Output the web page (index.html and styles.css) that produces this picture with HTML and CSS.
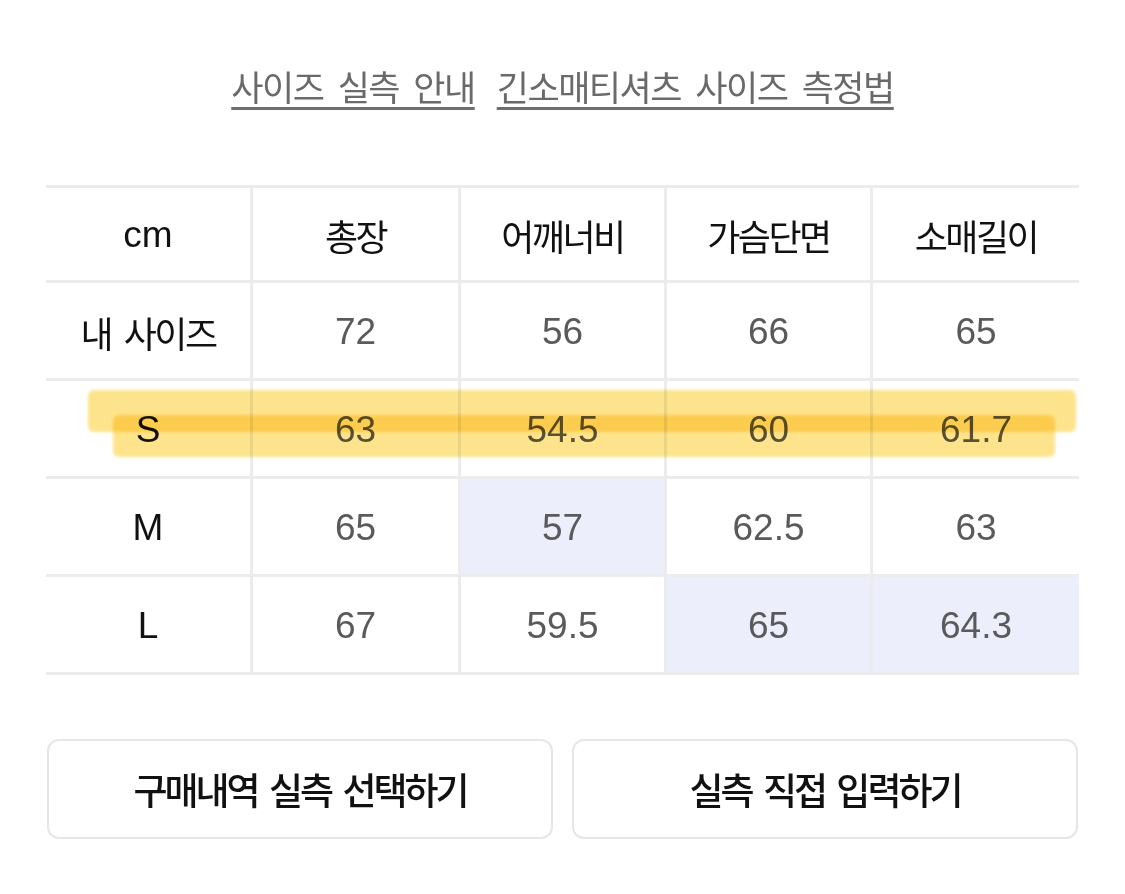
FILE: index.html
```html
<!DOCTYPE html>
<html lang="ko">
<head>
<meta charset="utf-8">
<title>사이즈</title>
<link rel="stylesheet" href="styles.css">
</head>
<body>
<div class="page">
  <nav class="links">
    <a class="link">사이즈 실측 안내</a>
    <a class="link">긴소매티셔츠 사이즈 측정법</a>
  </nav>

  <div class="table-wrap">
    <div class="table">
      <div class="cell head lat">cm</div>
      <div class="cell head ko">총장</div>
      <div class="cell head ko">어깨너비</div>
      <div class="cell head ko">가슴단면</div>
      <div class="cell head ko last">소매길이</div>

      <div class="cell label ko">내 사이즈</div>
      <div class="cell val">72</div>
      <div class="cell val">56</div>
      <div class="cell val">66</div>
      <div class="cell val last">65</div>

      <div class="cell label lat">S</div>
      <div class="cell val">63</div>
      <div class="cell val">54.5</div>
      <div class="cell val">60</div>
      <div class="cell val last">61.7</div>

      <div class="cell label lat">M</div>
      <div class="cell val">65</div>
      <div class="cell val blue">57</div>
      <div class="cell val">62.5</div>
      <div class="cell val last">63</div>

      <div class="cell label lat">L</div>
      <div class="cell val">67</div>
      <div class="cell val">59.5</div>
      <div class="cell val blue">65</div>
      <div class="cell val blue last">64.3</div>
    </div>
    <div class="marker marker-a"></div>
    <div class="marker marker-b"></div>
  </div>

  <div class="buttons">
    <button class="btn">구매내역 실측 선택하기</button>
    <button class="btn">실측 직접 입력하기</button>
  </div>
</div>
</body>
</html>
```

FILE: styles.css
```css
html, body {
  margin: 0;
  padding: 0;
  background: #ffffff;
}

body {
  font-family: "Liberation Sans", "Noto Sans CJK KR", sans-serif;
  color: #111111;
}

.page {
  width: 1033px;
  margin-left: 46px;
}

.links {
  display: flex;
  justify-content: center;
  gap: 22px;
  padding-top: 62px;
  height: 48px;
}

.link {
  font-family: "Noto Sans CJK KR", sans-serif;
  font-size: 35px;
  letter-spacing: -1.5px;
  word-spacing: 6px;
  line-height: 48px;
  color: #6a6a6a;
  text-decoration: underline;
  text-decoration-thickness: 3px;
  text-underline-offset: 6px;
  text-decoration-color: #6f6f6f;
}

.table-wrap {
  position: relative;
  margin-top: 75px;
}

.table {
  display: grid;
  grid-template-columns: 207px 208px 206px 206px 206px;
  grid-template-rows: 95px repeat(4, 98px);
  border-top: 3px solid #ececee;
}

.cell {
  box-sizing: border-box;
  display: flex;
  align-items: center;
  justify-content: center;
  border-bottom: 3px solid #ececee;
  border-right: 3px solid #ececee;
  padding-top: 2px;
}

.cell.last {
  border-right: none;
}

.ko {
  font-family: "Noto Sans CJK KR", sans-serif;
  font-size: 36px;
  letter-spacing: -2.5px;
  font-weight: 400;
  color: #111111;
}

.lat {
  font-family: "Liberation Sans", sans-serif;
  font-size: 37px;
  color: #111111;
}

.label.ko {
  word-spacing: 5px;
}

.val {
  font-family: "Liberation Sans", sans-serif;
  font-size: 37px;
  color: #5a5a5c;
}

.blue {
  background: #eceefc;
}

.marker {
  position: absolute;
  background: #fde48c;
  mix-blend-mode: multiply;
  border-radius: 6px;
  filter: blur(1.5px);
  pointer-events: none;
}

.marker-a {
  left: 42px;
  top: 205px;
  width: 988px;
  height: 42px;
}

.marker-b {
  left: 67px;
  top: 230px;
  width: 942px;
  height: 42px;
}

.buttons {
  display: grid;
  grid-template-columns: 506px 506px;
  gap: 19px;
  margin-top: 64px;
  padding-left: 1px;
}

.btn {
  height: 100px;
  background: #ffffff;
  border: 2px solid #e6e6e8;
  border-radius: 12px;
  font-family: "Noto Sans CJK KR", sans-serif;
  font-size: 37px;
  font-weight: 500;
  letter-spacing: -3px;
  word-spacing: 4px;
  color: #111111;
  padding: 0;
}
```
